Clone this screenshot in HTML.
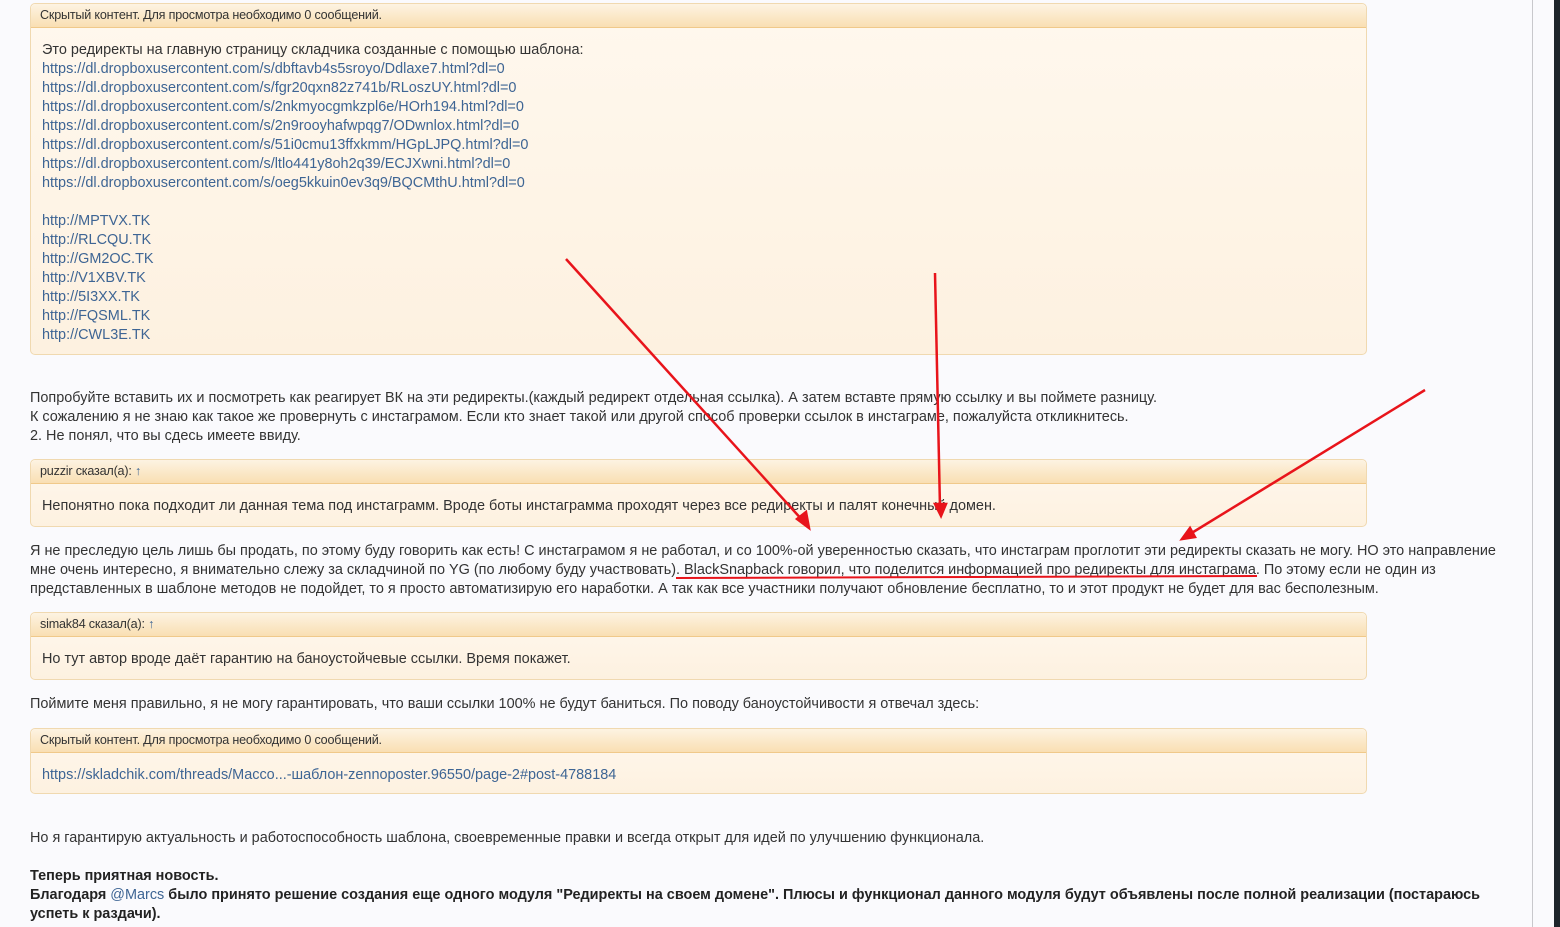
<!DOCTYPE html>
<html><head><meta charset="utf-8"><style>
body{margin:0;width:1560px;height:927px;background:#fafafd;font-family:"Liberation Sans",sans-serif;font-size:14.45px;color:#333;position:relative;overflow:hidden}
.vl{position:absolute;left:1532px;top:0;width:1px;height:927px;background:#c8c8cc}
.dk{position:absolute;left:1554px;top:0;width:6px;height:927px;background:#1e252b}
.q{position:absolute;left:30px;width:1335px;border:1px solid #f0d9b0;border-radius:5px;background:linear-gradient(#fff8ee,#fdf1e0)}
.qh{height:23px;line-height:22px;padding-left:9px;font-size:12.6px;color:#333;background:linear-gradient(#fdf3e2,#f9dfb3);border-bottom:1px solid #f0c98a;border-radius:5px 5px 0 0;letter-spacing:-.2px}
.qb{padding:13px 11px 11px;line-height:19px}
a{color:#3e6594;text-decoration:none}
.t{position:absolute;left:30px;line-height:19px;width:1500px}
</style></head><body>
<div class="vl"></div><div class="dk"></div>
<div class="q" style="top:3px;height:350px"><div class="qh">Скрытый контент. Для просмотра необходимо 0 сообщений.</div>
<div class="qb">Это редиректы на главную страницу складчика созданные с помощью шаблона:<br>
<a>https://dl.dropboxusercontent.com/s/dbftavb4s5sroyo/Ddlaxe7.html?dl=0</a><br>
<a>https://dl.dropboxusercontent.com/s/fgr20qxn82z741b/RLoszUY.html?dl=0</a><br>
<a>https://dl.dropboxusercontent.com/s/2nkmyocgmkzpl6e/HOrh194.html?dl=0</a><br>
<a>https://dl.dropboxusercontent.com/s/2n9rooyhafwpqg7/ODwnlox.html?dl=0</a><br>
<a>https://dl.dropboxusercontent.com/s/51i0cmu13ffxkmm/HGpLJPQ.html?dl=0</a><br>
<a>https://dl.dropboxusercontent.com/s/ltlo441y8oh2q39/ECJXwni.html?dl=0</a><br>
<a>https://dl.dropboxusercontent.com/s/oeg5kkuin0ev3q9/BQCMthU.html?dl=0</a><br><br>
<a>http://MPTVX.TK</a><br><a>http://RLCQU.TK</a><br><a>http://GM2OC.TK</a><br><a>http://V1XBV.TK</a><br><a>http://5I3XX.TK</a><br><a>http://FQSML.TK</a><br><a>http://CWL3E.TK</a></div></div>
<div class="t" style="top:389px">Попробуйте вставить их и посмотреть как реагирует ВК на эти редиректы.(каждый редирект отдельная ссылка). А затем вставте прямую ссылку и вы поймете разницу.<br>К сожалению я не знаю как такое же провернуть с инстаграмом. Если кто знает такой или другой способ проверки ссылок в инстаграме, пожалуйста откликнитесь.<br>2. Не понял, что вы сдесь имеете ввиду.</div>
<div class="q" style="top:459px;height:66px"><div class="qh">puzzir сказал(а): <a>↑</a></div><div class="qb">Непонятно пока подходит ли данная тема под инстаграмм. Вроде боты инстаграмма проходят через все редиректы и палят конечный домен.</div></div>
<div class="t" style="top:542px">Я не преследую цель лишь бы продать, по этому буду говорить как есть! С инстаграмом я не работал, и со 100%-ой уверенностью сказать, что инстаграм проглотит эти редиректы сказать не могу. НО это направление<br>мне очень интересно, я внимательно слежу за складчиной по YG (по любому буду участвовать). BlackSnapback говорил, что поделится информацией про редиректы для инстаграма. По этому если не один из<br>представленных в шаблоне методов не подойдет, то я просто автоматизирую его наработки. А так как все участники получают обновление бесплатно, то и этот продукт не будет для вас бесполезным.</div>
<div class="q" style="top:612px;height:66px"><div class="qh">simak84 сказал(а): <a>↑</a></div><div class="qb">Но тут автор вроде даёт гарантию на баноустойчевые ссылки. Время покажет.</div></div>
<div class="t" style="top:695px">Поймите меня правильно, я не могу гарантировать, что ваши ссылки 100% не будут баниться. По поводу баноустойчивости я отвечал здесь:</div>
<div class="q" style="top:728px;height:64px"><div class="qh">Скрытый контент. Для просмотра необходимо 0 сообщений.</div><div class="qb"><a>https://skladchik.com/threads/Macco...-шаблон-zennoposter.96550/page-2#post-4788184</a></div></div>
<div class="t" style="top:829px">Но я гарантирую актуальность и работоспособность шаблона, своевременные правки и всегда открыт для идей по улучшению функционала.</div>
<div class="t" style="top:867px;font-weight:bold;color:#222">Теперь приятная новость.<br>Благодаря <a style="font-weight:normal">@Marcs</a> было принято решение создания еще одного модуля "Редиректы на своем домене". Плюсы и функционал данного модуля будут объявлены после полной реализации (постараюсь<br>успеть к раздачи).</div>
<svg style="position:absolute;left:0;top:0" width="1560" height="927">
<g stroke="#e8141b" stroke-width="2.5" fill="#e8141b">
<line x1="566" y1="259" x2="804" y2="522"/><polygon points="809,528 797,519 806,512"/>
<line x1="935" y1="273" x2="940" y2="508"/><polygon points="941,516 935,504 946,504"/>
<line x1="1425" y1="390" x2="1190" y2="534"/><polygon points="1182,539 1190,528 1195,537"/>
<line x1="676" y1="578" x2="1257" y2="576" stroke-width="2"/>
</g></svg>
</body></html>
